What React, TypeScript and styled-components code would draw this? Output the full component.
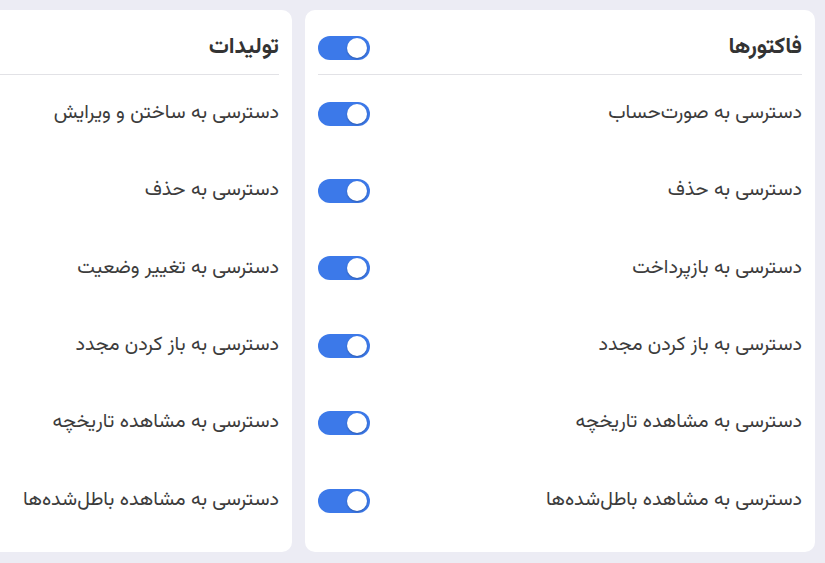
import React from "react";
import styled, { createGlobalStyle } from "styled-components";

const Global = createGlobalStyle`
  html, body { margin: 0; padding: 0; background: #ececf4; }
  body {
    direction: rtl;
    overflow: hidden;
    font-family: "Vazirmatn", "Noto Sans Arabic", "Noto Sans", "DejaVu Sans", sans-serif;
  }
`;

const Page = styled.div`
  display: flex;
  gap: 13px;
  padding: 10px 10px 11px 10px;
  width: 825px;
  height: 563px;
  box-sizing: border-box;
  overflow: hidden;
`;

const Card = styled.section`
  flex: 0 0 510px;
  background: #ffffff;
  border-radius: 10px;
  padding: 0 13px 12px;
  box-sizing: border-box;
  display: flex;
  flex-direction: column;
`;

const Header = styled.div`
  display: flex;
  align-items: center;
  justify-content: space-between;
  padding-top: 12px;
  height: 52px;
  border-bottom: 1px solid #e2e2e6;
`;

const Title = styled.h2`
  margin: 0;
  font-size: 22.5px;
  font-weight: 700;
  color: #333333;
  line-height: 1;
`;

const Row = styled.div`
  display: flex;
  align-items: center;
  justify-content: space-between;
  height: 77.4px;
`;

const Label = styled.span`
  font-size: 19.8px;
  color: #3c3c3c;
  line-height: 1;
`;

const Switch = styled.span<{ $on: boolean }>`
  position: relative;
  width: 52px;
  height: 24px;
  border-radius: 12px;
  background: ${(p) => (p.$on ? "#3c79e9" : "#c9c9d1")};
  flex-shrink: 0;
`;

const Knob = styled.span<{ $on: boolean }>`
  position: absolute;
  top: 2px;
  ${(p) => (p.$on ? "right: 3px;" : "left: 3px;")}
  width: 20px;
  height: 20px;
  border-radius: 50%;
  background: #ffffff;
  box-shadow: 0 1px 2px rgba(0, 0, 0, 0.25);
`;

const Toggle = ({ on = true }: { on?: boolean }) => (
  <Switch $on={on}>
    <Knob $on={on} />
  </Switch>
);

const sections = [
  {
    title: "فاکتورها",
    items: [
      "دسترسی به صورت‌حساب",
      "دسترسی به حذف",
      "دسترسی به بازپرداخت",
      "دسترسی به باز کردن مجدد",
      "دسترسی به مشاهده تاریخچه",
      "دسترسی به مشاهده باطل‌شده‌ها",
    ],
  },
  {
    title: "تولیدات",
    items: [
      "دسترسی به ساختن و ویرایش",
      "دسترسی به حذف",
      "دسترسی به تغییر وضعیت",
      "دسترسی به باز کردن مجدد",
      "دسترسی به مشاهده تاریخچه",
      "دسترسی به مشاهده باطل‌شده‌ها",
    ],
  },
];

export default function App() {
  return (
    <>
      <Global />
      <Page>
        {sections.map((s) => (
          <Card key={s.title}>
            <Header>
              <Title>{s.title}</Title>
              <Toggle />
            </Header>
            {s.items.map((it) => (
              <Row key={it}>
                <Label>{it}</Label>
                <Toggle />
              </Row>
            ))}
          </Card>
        ))}
      </Page>
    </>
  );
}
